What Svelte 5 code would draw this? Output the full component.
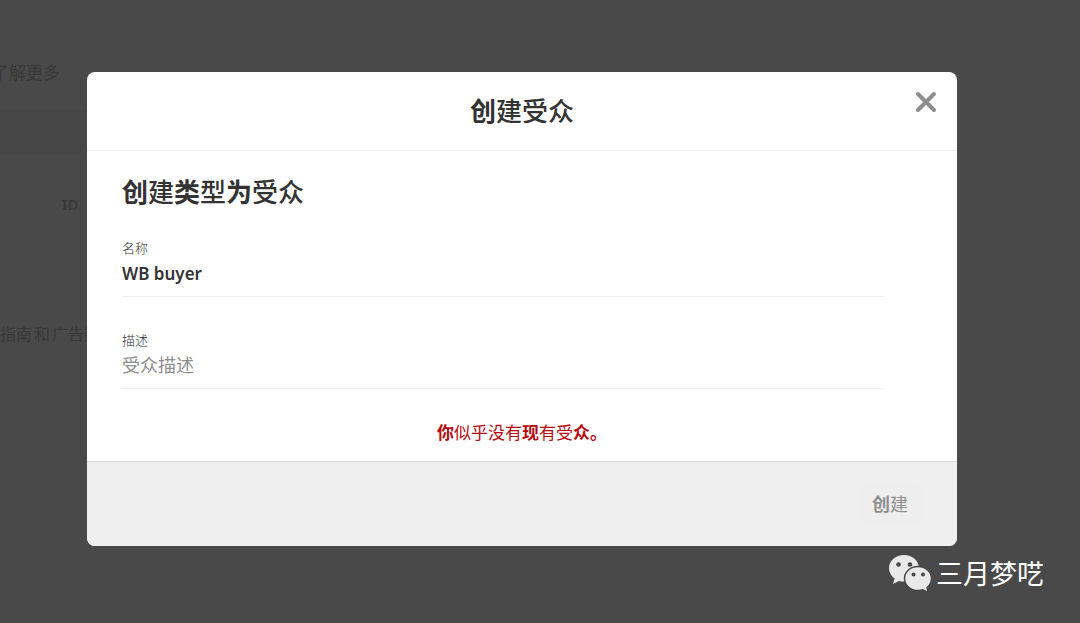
<script lang="ts">
  // Modal for creating an audience, shown over the dimmed ads page.
  let name = $state("WB buyer");
  let description = $state("");
  let open = $state(true);

  function close() {
    open = false;
  }
</script>

<div class="page">
  <div class="page__content">
    <a class="page__more" href="#more">了解更多</a>
    <div class="page__bar"></div>
    <div class="page__column">ID</div>
    <p class="page__links">
      <a href="#guide">指南</a><span>和</span><a href="#ads">广告数据</a>
    </p>
  </div>

  {#if open}
    <div class="overlay">
      <!-- Phrases here mix two weights, so the heavier runs are marked up. -->
      <div class="modal" role="dialog" aria-modal="true" aria-labelledby="modal-title">
        <header class="modal__header">
          <h1 id="modal-title"><b>创</b>建受众</h1>
          <button class="close" type="button" aria-label="关闭" onclick={close}>
            <svg viewBox="0 0 22 22" width="22" height="22" aria-hidden="true">
              <path d="M3 3 19 19M19 3 3 19" />
            </svg>
          </button>
        </header>

        <div class="modal__body">
          <h2><b>创</b>建<b>类</b>型<b>为</b>受众</h2>

          <div class="field">
            <label for="name">名称</label>
            <input id="name" class="field__name" type="text" bind:value={name} />
          </div>

          <div class="field">
            <label for="description">描述</label>
            <input
              id="description"
              type="text"
              placeholder="受众描述"
              bind:value={description}
            />
          </div>
        </div>

        <p class="error" role="alert"><b>你</b>似乎没有<b>现</b>有受<b>众。</b></p>

        <footer class="modal__footer">
          <button class="create" type="button" disabled><b>创</b>建</button>
        </footer>
      </div>
    </div>
  {/if}

  <div class="watermark">
    <svg viewBox="0 0 44 40" width="44" height="40" aria-hidden="true">
      <path
        class="bubble"
        d="M16 1C7.700 1 1 6.800 1 14.200c0 4.200 2.200 7.900 5.600 10.300L5 30l6-3c1.600.4 3.300.6 5 .6 8.300 0 15-5.900 15-13.300S24.300 1 16 1z"
      />
      <circle class="eye" cx="10.500" cy="10.500" r="2.300" />
      <circle class="eye" cx="22" cy="10.500" r="2.300" />
      <path
        class="bubble bubble--front"
        d="M30 12.500c-7.500 0-13.500 5.400-13.500 12s6 12 13.500 12c1.700 0 3.300-.3 4.800-.8l5.600 2.800-1.400-5c2.800-2.200 4.500-5.400 4.500-9 0-6.600-6-12-13.500-12z"
      />
      <circle class="eye" cx="25.500" cy="20.500" r="2" />
      <circle class="eye" cx="35" cy="20.500" r="2" />
    </svg>
    <span>三月梦呓</span>
  </div>
</div>

<style>
  :global(body) {
    margin: 0;
    background: #fff;
  }

  .page {
    --ink: #333;
    --muted: #8e8e8e;
    --line: #efefef;
    position: relative;
    min-height: 100vh;
    overflow: hidden;
    font-family: "Open Sans", "Noto Sans CJK SC", sans-serif;
    font-size: 18px;
    color: var(--ink);
  }

  .page *,
  .page {
    box-sizing: border-box;
  }

  .page__content {
    display: flex;
    flex-direction: column;
    padding-top: 60px;
    color: #c4c4c4;
    font-size: 17px;
    line-height: 26px;
  }

  .page__content a {
    color: inherit;
    text-decoration: none;
  }

  .page__more {
    margin-left: -8px;
  }

  .page__bar {
    width: 80%;
    height: 43px;
    margin-top: 24px;
    background: #f9f9f9;
  }

  .page__column {
    margin-top: 38px;
    padding-left: 62px;
    font-family: "Noto Sans", sans-serif;
    font-size: 15px;
    font-weight: 600;
  }

  .page__links {
    display: flex;
    gap: 2px;
    margin: 104px 0 0;
    font-size: 16px;
  }

  .overlay {
    position: absolute;
    inset: 0;
    padding: 72px 123px 0 87px;
    background: rgba(0, 0, 0, 0.715);
  }

  .modal {
    overflow: hidden;
    background: #fff;
    border-radius: 8px;
  }

  .modal__header {
    position: relative;
    padding: 20px 60px;
    border-bottom: 1px solid var(--line);
  }

  h1,
  h2 {
    margin: 0;
    font-size: 26px;
    font-weight: 500;
    line-height: 38px;
  }

  h1 {
    text-align: center;
  }

  b {
    font-weight: 700;
  }

  button {
    border: 0;
    font: inherit;
  }

  .close {
    position: absolute;
    top: 19px;
    right: 20px;
    display: flex;
    padding: 0;
    background: none;
    cursor: pointer;
  }

  .close path {
    fill: none;
    stroke: var(--muted);
    stroke-width: 4;
    stroke-linecap: round;
  }

  .modal__body {
    padding: 22px 73px 0 35px;
  }

  .field {
    display: flex;
    flex-direction: column;
    margin-top: 28px;
    border-bottom: 1px solid var(--line);
  }

  h2 + .field {
    margin-top: 22px;
  }

  .field label {
    padding-top: 5px;
    font-size: 13px;
    font-weight: 300;
    line-height: 20px;
  }

  .field input {
    height: 30px;
    margin-bottom: 8px;
    padding: 0;
    border: 0;
    outline: 0;
    background: none;
    color: var(--ink);
    font: inherit;
  }

  .field .field__name {
    font-family: "Noto Sans", "Noto Sans CJK SC", sans-serif;
    font-size: 17px;
    font-weight: 600;
  }

  .field input::placeholder {
    color: var(--muted);
    opacity: 1;
  }

  .error {
    margin: 30px 0 15px;
    color: #b9090f;
    font-size: 17px;
    line-height: 27px;
    text-align: center;
  }

  .modal__footer {
    display: flex;
    justify-content: flex-end;
    padding: 22px 35px 21px;
    background: #efefef;
    border-top: 1px solid #d8d8d8;
  }

  .create {
    padding: 6px 14px;
    background: #eee;
    border-radius: 8px;
    color: var(--muted);
    line-height: 29px;
  }

  .watermark {
    position: absolute;
    right: 36px;
    bottom: 29px;
    display: flex;
    align-items: center;
    gap: 4px;
    color: #fff;
    font-size: 27px;
    line-height: 40px;
  }

  .bubble {
    fill: #e9e9e9;
  }

  .bubble--front {
    stroke: #484848;
    stroke-width: 1.500;
  }

  .eye {
    fill: #484848;
  }
</style>
